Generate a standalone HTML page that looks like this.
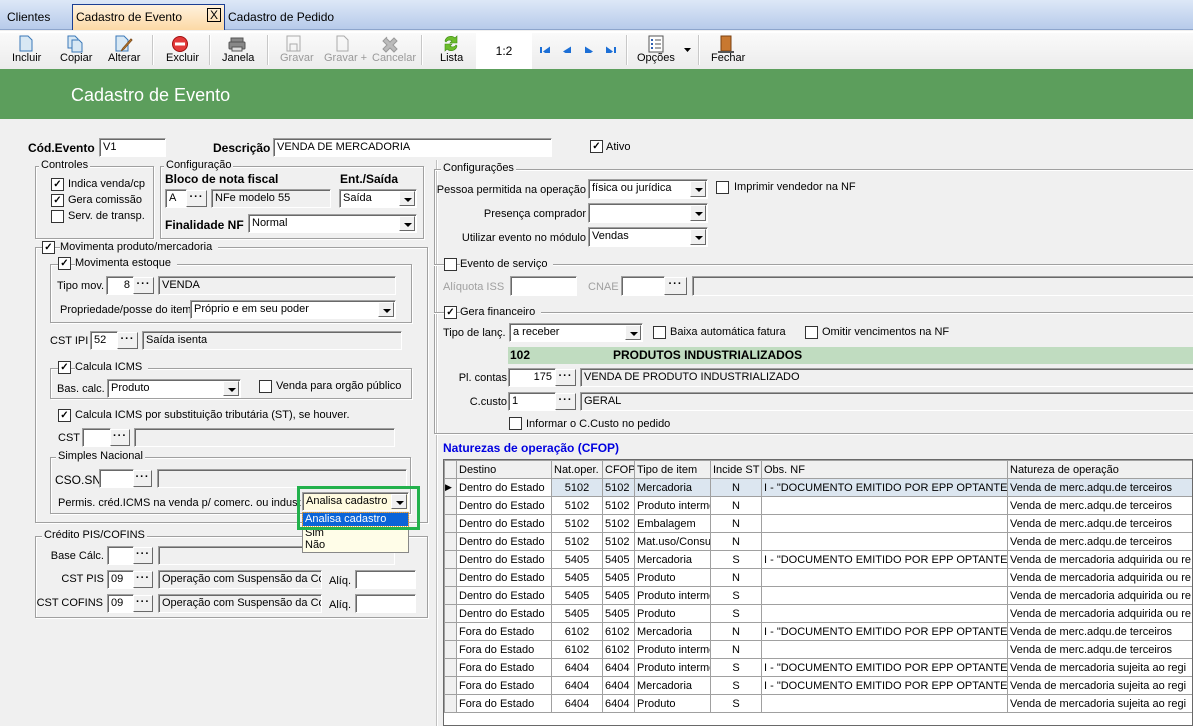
<!DOCTYPE html>
<html><head><meta charset="utf-8">
<style>
*{box-sizing:border-box;margin:0;padding:0}
body{width:1193px;height:726px;overflow:hidden;background:#f0f0f0;font-family:"Liberation Sans",sans-serif;font-size:11px;color:#000;position:relative}
.a{position:absolute;white-space:nowrap}
.r{position:absolute;white-space:nowrap;text-align:right}
.in{position:absolute;background:#fff;border:1px solid;border-color:#a0a0a0 #fff #fff #a0a0a0;box-shadow:inset 1px 1px 0 #696969;padding:1px 3px;line-height:15px;overflow:hidden;white-space:nowrap}
.dis{background:#f0f0f0}
.bt{position:absolute;background:#f0f0f0;border:1px solid;border-color:#fff #696969 #696969 #fff;text-align:center;font-weight:bold;line-height:12px;font-size:11px;letter-spacing:1px}
.cb{position:absolute;width:13px;height:13px;background:#fff;border:1px solid #333;font-size:10px;line-height:11px;text-align:center;font-weight:bold}
.fr{position:absolute;border:1px solid #a0a0a0;box-shadow:1px 1px 0 #fff, inset 1px 1px 0 #fff}
.lg{position:absolute;background:#f0f0f0;padding:0 2px;top:-8px;left:6px;white-space:nowrap}
.ar{position:absolute;right:1px;top:1px;bottom:1px;width:16px;background:#f0f0f0;border:1px solid;border-color:#fff #696969 #696969 #fff}
.ar:after{content:"";position:absolute;left:4px;top:6px;border:4px solid transparent;border-top:4px solid #000;border-bottom:0}
.b{font-weight:bold}
.tb{position:absolute;top:52px;font-size:11px;text-align:center}
.sep{position:absolute;top:35px;width:1px;height:30px;background:#c8c8c8;box-shadow:1px 0 0 #fff}
table{border-collapse:collapse;font-size:11px;table-layout:fixed}
td{border:1px solid #a0a0a0;height:18px;padding:0 2px;white-space:nowrap;overflow:hidden;background:#fff}
.c{text-align:center}
.z{z-index:5}
</style></head><body>
<div class="a" style="left:0;top:0;width:1193px;height:30px;background:linear-gradient(#dde8f7,#b7cbea);border-bottom:1px solid #8da5cc"></div>
<div class="a" style="left:7px;top:10px;font-size:12px">Clientes</div>
<div class="a" style="left:72px;top:4px;width:153px;height:26px;background:linear-gradient(#fff2dd,#fcd9a5);border:1px solid #1c3f94;border-bottom:0"></div>
<div class="a" style="left:76px;top:10px;font-size:12px">Cadastro de Evento</div>
<div class="a" style="left:207px;top:8px;width:14px;height:14px;border:1px solid #000;font-size:12px;line-height:12px;text-align:center">X</div>
<div class="a" style="left:228px;top:10px;font-size:12px">Cadastro de Pedido</div>
<div class="a" style="left:0;top:31px;width:1193px;height:38px;background:linear-gradient(#fafafa,#ececec);border-top:2px solid #fff"></div>
<svg class="a" style="left:0;top:33px" width="760" height="20">
<g fill="#d8e8f4" stroke="#3a78b8"><path d="M20 3h8l4 4v11H20z"/><path d="M68 3h7l3 3v9H68z"/><path d="M72 7h7l3 3v9H72z"/><path d="M116 3h8l4 4v11h-12z"/></g>
<path d="M131 6l-8 9-2 3 3-2 8-9z" fill="#f0a030" stroke="#805020"/>
<circle cx="180" cy="11" r="7.5" fill="#e43a3a" stroke="#a01010"/><rect x="175" y="9.5" width="10" height="3" fill="#fff"/>
<g fill="#888" stroke="#555"><rect x="231" y="5" width="12" height="4"/><rect x="229" y="9" width="16" height="7" rx="1"/><rect x="232" y="14" width="10" height="4" fill="#ddd"/></g>
<g fill="none" stroke="#aaa"><rect x="287" y="3" width="13" height="15"/><rect x="290" y="11" width="7" height="7"/><path d="M337 3h7l4 4v11h-11z"/></g>
<path d="M387 4l-4 4 4 4-4 4 3 3 4-4 4 4 3-3-4-4 4-4-3-3-4 4-4-4z" fill="#bbb" stroke="#999"/>
<path d="M445 8a6 6 0 0 1 10-3l2-2v7h-7l2-2a4 4 0 0 0-6 1zM457 13a6 6 0 0 1-10 3l-2 2v-7h7l-2 2a4 4 0 0 0 6-1z" fill="#6cbd2c" stroke="#3c8a10" stroke-width=".6"/>
<g fill="#1c6fd6"><rect x="540" y="14" width="2" height="9"/><path d="M543 18.5l7-5v10z"/><path d="M563 18.5l8-5v10z"/><path d="M593 18.5l-8-5v10z"/><path d="M613 18.5l-7-5v10z"/><rect x="614" y="14" width="2" height="9"/></g>
<g><rect x="649" y="3" width="14" height="16" fill="#fff" stroke="#555"/><g fill="#3060b0"><rect x="651" y="6" width="2" height="2"/><rect x="651" y="10" width="2" height="2"/><rect x="651" y="14" width="2" height="2"/></g><g stroke="#555"><path d="M655 7h6M655 11h6M655 15h6"/></g></g>
<path d="M684 15h7l-3.5 4z" fill="#000"/>
<rect x="721" y="3" width="10" height="15" fill="#c87830" stroke="#7a4010"/><rect x="718" y="18" width="16" height="2" fill="#555"/>
</svg>
<div class="tb" style="left:12px">Incluir</div>
<div class="tb" style="left:60px">Copiar</div>
<div class="tb" style="left:108px">Alterar</div>
<div class="sep" style="left:152px"></div>
<div class="tb" style="left:166px">Excluir</div>
<div class="sep" style="left:209px"></div>
<div class="tb" style="left:222px">Janela</div>
<div class="sep" style="left:267px"></div>
<div class="tb" style="left:280px;color:#999">Gravar</div>
<div class="tb" style="left:324px;color:#999">Gravar +</div>
<div class="tb" style="left:372px;color:#999">Cancelar</div>
<div class="sep" style="left:421px"></div>
<div class="tb" style="left:440px">Lista</div>
<div class="a" style="left:476px;top:33px;width:56px;height:36px;background:#fff;text-align:center;line-height:36px;font-size:12px">1:2</div>
<div class="sep" style="left:626px"></div>
<div class="tb" style="left:637px">Opções</div>
<div class="sep" style="left:698px"></div>
<div class="tb" style="left:711px">Fechar</div>
<div class="a" style="left:0;top:69px;width:1193px;height:50px;background:#5c9e5c"></div>
<div class="a" style="left:71px;top:85px;color:#fff;font-size:18px">Cadastro de Evento</div>

<div class="a b" style="left:28px;top:141px;font-size:12px">Cód.Evento</div>
<div class="in" style="left:99px;top:138px;width:67px;height:19px">V1</div>
<div class="a b" style="left:213px;top:141px;font-size:12px">Descrição</div>
<div class="in" style="left:273px;top:138px;width:279px;height:19px">VENDA DE MERCADORIA</div>
<div class="cb" style="left:590px;top:140px">✓</div><div class="a" style="left:606px;top:141px">Ativo</div>

<div class="fr" style="left:35px;top:166px;width:119px;height:73px"><div class="lg" style="left:3px">Controles</div></div>
<div class="cb" style="left:51px;top:178px">✓</div><div class="a" style="left:68px;top:178px">Indica venda/cp</div>
<div class="cb" style="left:51px;top:194px">✓</div><div class="a" style="left:68px;top:194px">Gera comissão</div>
<div class="cb" style="left:51px;top:210px"></div><div class="a" style="left:68px;top:210px">Serv. de transp.</div>
<div class="fr" style="left:160px;top:166px;width:264px;height:73px"><div class="lg" style="left:3px">Configuração</div></div>
<div class="a b" style="left:165px;top:172px;font-size:12px">Bloco de nota fiscal</div>
<div class="a b" style="left:340px;top:172px;font-size:12px">Ent./Saída</div>
<div class="in" style="left:165px;top:189px;width:22px;height:19px">A</div><div class="bt" style="left:186px;top:190px;width:21px;height:17px">···</div>
<div class="in dis" style="left:211px;top:189px;width:120px;height:19px">NFe modelo 55</div>
<div class="in" style="left:339px;top:189px;width:78px;height:19px">Saída<div class="ar"></div></div>
<div class="a b" style="left:165px;top:218px;font-size:12px">Finalidade NF</div>
<div class="in" style="left:248px;top:214px;width:169px;height:19px">Normal<div class="ar"></div></div>

<div class="fr" style="left:35px;top:247px;width:393px;height:276px"></div>
<div class="cb" style="left:42px;top:241px">✓</div><div class="a" style="left:60px;top:241px;background:#f0f0f0;padding-right:6px">Movimenta produto/mercadoria</div>
<div class="fr" style="left:50px;top:264px;width:362px;height:59px"></div>
<div class="cb" style="left:58px;top:257px">✓</div><div class="a" style="left:75px;top:257px;background:#f0f0f0;padding-right:6px">Movimenta estoque</div>
<div class="a" style="left:57px;top:280px">Tipo mov.</div>
<div class="in" style="left:106px;top:276px;width:28px;height:19px;text-align:right">8</div><div class="bt" style="left:133px;top:277px;width:21px;height:17px">···</div>
<div class="in dis" style="left:158px;top:276px;width:238px;height:19px">VENDA</div>
<div class="a" style="left:60px;top:304px">Propriedade/posse do item</div>
<div class="in" style="left:190px;top:300px;width:206px;height:19px">Próprio e em seu poder<div class="ar"></div></div>
<div class="a" style="left:50px;top:335px">CST IPI</div>
<div class="in" style="left:90px;top:331px;width:28px;height:19px">52</div><div class="bt" style="left:117px;top:332px;width:21px;height:17px">···</div>
<div class="in dis" style="left:142px;top:331px;width:260px;height:19px">Saída isenta</div>
<div class="fr" style="left:50px;top:368px;width:362px;height:31px"></div>
<div class="cb" style="left:58px;top:361px">✓</div><div class="a" style="left:75px;top:361px;background:#f0f0f0;padding-right:6px">Calcula ICMS</div>
<div class="a" style="left:57px;top:383px">Bas. calc.</div>
<div class="in" style="left:107px;top:379px;width:134px;height:19px">Produto<div class="ar"></div></div>
<div class="cb" style="left:259px;top:380px"></div><div class="a" style="left:276px;top:380px">Venda para orgão público</div>
<div class="cb" style="left:58px;top:409px">✓</div><div class="a" style="left:75px;top:409px">Calcula ICMS por substituição tributária (ST), se houver.</div>
<div class="a" style="left:58px;top:432px">CST</div>
<div class="in" style="left:82px;top:428px;width:29px;height:19px"></div><div class="bt" style="left:110px;top:429px;width:20px;height:17px">···</div>
<div class="in dis" style="left:134px;top:428px;width:261px;height:19px"></div>
<div class="fr" style="left:50px;top:457px;width:361px;height:57px"><div class="lg" style="left:5px">Simples Nacional</div></div>
<div class="a" style="left:55px;top:473px;font-size:12px">CSO.SN</div>
<div class="in" style="left:99px;top:469px;width:35px;height:19px"></div><div class="bt" style="left:133px;top:470px;width:19px;height:17px">···</div>
<div class="in dis" style="left:157px;top:469px;width:250px;height:19px"></div>
<div class="a" style="left:58px;top:497px;width:243px;overflow:hidden">Permis. créd.ICMS na venda p/ comerc. ou industr</div>

<div class="fr" style="left:35px;top:536px;width:393px;height:82px"><div class="lg" style="left:6px">Crédito PIS/COFINS</div></div>
<div class="r" style="right:1089px;top:550px">Base Cálc.</div>
<div class="in" style="left:107px;top:546px;width:27px;height:19px"></div><div class="bt" style="left:133px;top:547px;width:20px;height:17px">···</div>
<div class="in dis" style="left:158px;top:546px;width:237px;height:19px"></div>
<div class="r" style="right:1089px;top:573px">CST PIS</div>
<div class="in" style="left:107px;top:570px;width:27px;height:19px">09</div><div class="bt" style="left:133px;top:571px;width:20px;height:17px">···</div>
<div class="in dis" style="left:158px;top:570px;width:164px;height:19px">Operação com Suspensão da Co</div>
<div class="a" style="left:329px;top:575px">Alíq.</div><div class="in" style="left:355px;top:570px;width:61px;height:19px"></div>
<div class="r" style="right:1090px;top:597px">CST COFINS</div>
<div class="in" style="left:107px;top:594px;width:27px;height:19px">09</div><div class="bt" style="left:133px;top:595px;width:20px;height:17px">···</div>
<div class="in dis" style="left:158px;top:594px;width:164px;height:19px">Operação com Suspensão da Co</div>
<div class="a" style="left:329px;top:599px">Alíq.</div><div class="in" style="left:355px;top:594px;width:61px;height:19px"></div>

<div class="in z" style="left:302px;top:492px;width:107px;height:19px;background:#fffbe0">Analisa cadastro<div class="ar"></div></div>
<div class="a z" style="left:302px;top:512px;width:107px;height:41px;background:#fffde8;border:1px solid #888"></div>
<div class="a z" style="left:303px;top:513px;width:105px;height:13px;background:#0a64d8;color:#fff;line-height:13px;padding-left:2px;outline:1px dotted #f0a030">Analisa cadastro</div>
<div class="a z" style="left:305px;top:527px;line-height:12px">Sim</div>
<div class="a z" style="left:305px;top:539px;line-height:12px">Não</div>
<div class="a z" style="left:297px;top:486px;width:123px;height:44px;border:3px solid #22b14c"></div>

<div class="a" style="left:436px;top:160px;width:1px;height:566px;background:#c0c0c0;box-shadow:1px 0 0 #fff"></div>

<div class="fr" style="left:434px;top:169px;width:770px;height:265px"><div class="lg" style="left:6px">Configurações</div></div>
<div class="r" style="right:607px;top:184px">Pessoa permitida na operação</div>
<div class="in" style="left:588px;top:179px;width:120px;height:20px">física ou jurídica<div class="ar"></div></div>
<div class="cb" style="left:716px;top:181px"></div><div class="a" style="left:734px;top:181px">Imprimir vendedor na NF</div>
<div class="r" style="right:607px;top:208px">Presença comprador</div>
<div class="in" style="left:588px;top:203px;width:120px;height:20px"><div class="ar"></div></div>
<div class="r" style="right:607px;top:232px">Utilizar evento no módulo</div>
<div class="in" style="left:588px;top:227px;width:120px;height:20px">Vendas<div class="ar"></div></div>
<div class="a" style="left:434px;top:264px;width:760px;height:1px;background:#a0a0a0;box-shadow:0 1px 0 #fff"></div>
<div class="cb" style="left:444px;top:258px"></div><div class="a" style="left:460px;top:258px;background:#f0f0f0;padding-right:6px">Evento de serviço</div>
<div class="a" style="left:443px;top:281px;color:#a0a0a0">Alíquota ISS</div>
<div class="in" style="left:510px;top:276px;width:67px;height:20px"></div>
<div class="a" style="left:588px;top:281px;color:#a0a0a0">CNAE</div>
<div class="in" style="left:621px;top:276px;width:44px;height:20px"></div><div class="bt" style="left:664px;top:277px;width:23px;height:18px">···</div>
<div class="in dis" style="left:692px;top:276px;width:502px;height:20px"></div>
<div class="a" style="left:434px;top:312px;width:760px;height:1px;background:#a0a0a0;box-shadow:0 1px 0 #fff"></div>
<div class="cb" style="left:444px;top:306px">✓</div><div class="a" style="left:460px;top:306px;background:#f0f0f0;padding-right:6px">Gera financeiro</div>
<div class="a" style="left:443px;top:327px">Tipo de lanç.</div>
<div class="in" style="left:509px;top:323px;width:134px;height:19px">a receber<div class="ar"></div></div>
<div class="cb" style="left:653px;top:326px"></div><div class="a" style="left:670px;top:326px">Baixa automática fatura</div>
<div class="cb" style="left:805px;top:326px"></div><div class="a" style="left:822px;top:326px">Omitir vencimentos na NF</div>
<div class="a b" style="left:508px;top:347px;width:685px;height:17px;background:#c0dcc0;padding-left:2px;line-height:16px;font-size:12px">102<span style="position:absolute;left:105px">PRODUTOS INDUSTRIALIZADOS</span></div>
<div class="r" style="right:686px;top:372px">Pl. contas</div>
<div class="in" style="left:508px;top:368px;width:48px;height:19px;text-align:right">175</div><div class="bt" style="left:555px;top:369px;width:21px;height:17px">···</div>
<div class="in dis" style="left:580px;top:368px;width:614px;height:19px">VENDA DE PRODUTO INDUSTRIALIZADO</div>
<div class="r" style="right:686px;top:396px">C.custo</div>
<div class="in" style="left:508px;top:392px;width:48px;height:19px">1</div><div class="bt" style="left:555px;top:393px;width:21px;height:17px">···</div>
<div class="in dis" style="left:580px;top:392px;width:614px;height:19px">GERAL</div>
<div class="cb" style="left:509px;top:417px"></div><div class="a" style="left:526px;top:418px">Informar o C.Custo no pedido</div>

<div class="a b" style="left:443px;top:441px;color:#0000e0;font-size:12px">Naturezas de operação (CFOP)</div>
<div class="a" style="left:443px;top:459px;width:750px;height:267px;background:#fff;border:1px solid #696969;overflow:hidden">
<table style="width:760px">
<colgroup><col style="width:12px"><col style="width:95px"><col style="width:51px"><col style="width:32px"><col style="width:76px"><col style="width:51px"><col style="width:246px"><col style="width:197px"></colgroup>
<tr><td style="background:#f0f0f0"></td><td style="background:#f0f0f0">Destino</td><td style="background:#f0f0f0">Nat.oper.</td><td style="background:#f0f0f0">CFOP</td><td style="background:#f0f0f0">Tipo de item</td><td style="background:#f0f0f0">Incide ST</td><td style="background:#f0f0f0">Obs. NF</td><td style="background:#f0f0f0">Natureza de operação</td></tr>
<tr><td style="background:#f0f0f0;font-size:9px;padding:0">▶</td><td>Dentro do Estado</td><td class="c" style="background:#dce6f0">5102</td><td style="background:#dce6f0">5102</td><td style="background:#dce6f0">Mercadoria</td><td class="c" style="background:#dce6f0">N</td><td style="background:#dce6f0">I - "DOCUMENTO EMITIDO POR EPP OPTANTE</td><td style="background:#dce6f0">Venda de merc.adqu.de terceiros</td></tr>
<tr><td style="background:#f0f0f0"></td><td>Dentro do Estado</td><td class="c">5102</td><td>5102</td><td>Produto interme</td><td class="c">N</td><td></td><td>Venda de merc.adqu.de terceiros</td></tr>
<tr><td style="background:#f0f0f0"></td><td>Dentro do Estado</td><td class="c">5102</td><td>5102</td><td>Embalagem</td><td class="c">N</td><td></td><td>Venda de merc.adqu.de terceiros</td></tr>
<tr><td style="background:#f0f0f0"></td><td>Dentro do Estado</td><td class="c">5102</td><td>5102</td><td>Mat.uso/Consu</td><td class="c">N</td><td></td><td>Venda de merc.adqu.de terceiros</td></tr>
<tr><td style="background:#f0f0f0"></td><td>Dentro do Estado</td><td class="c">5405</td><td>5405</td><td>Mercadoria</td><td class="c">S</td><td>I - "DOCUMENTO EMITIDO POR EPP OPTANTE</td><td>Venda de mercadoria adquirida ou re</td></tr>
<tr><td style="background:#f0f0f0"></td><td>Dentro do Estado</td><td class="c">5405</td><td>5405</td><td>Produto</td><td class="c">N</td><td></td><td>Venda de mercadoria adquirida ou re</td></tr>
<tr><td style="background:#f0f0f0"></td><td>Dentro do Estado</td><td class="c">5405</td><td>5405</td><td>Produto interme</td><td class="c">S</td><td></td><td>Venda de mercadoria adquirida ou re</td></tr>
<tr><td style="background:#f0f0f0"></td><td>Dentro do Estado</td><td class="c">5405</td><td>5405</td><td>Produto</td><td class="c">S</td><td></td><td>Venda de mercadoria adquirida ou re</td></tr>
<tr><td style="background:#f0f0f0"></td><td>Fora do Estado</td><td class="c">6102</td><td>6102</td><td>Mercadoria</td><td class="c">N</td><td>I - "DOCUMENTO EMITIDO POR EPP OPTANTE</td><td>Venda de merc.adqu.de terceiros</td></tr>
<tr><td style="background:#f0f0f0"></td><td>Fora do Estado</td><td class="c">6102</td><td>6102</td><td>Produto interme</td><td class="c">N</td><td></td><td>Venda de merc.adqu.de terceiros</td></tr>
<tr><td style="background:#f0f0f0"></td><td>Fora do Estado</td><td class="c">6404</td><td>6404</td><td>Produto interme</td><td class="c">S</td><td>I - "DOCUMENTO EMITIDO POR EPP OPTANTE</td><td>Venda de mercadoria sujeita ao regi</td></tr>
<tr><td style="background:#f0f0f0"></td><td>Fora do Estado</td><td class="c">6404</td><td>6404</td><td>Mercadoria</td><td class="c">S</td><td>I - "DOCUMENTO EMITIDO POR EPP OPTANTE</td><td>Venda de mercadoria sujeita ao regi</td></tr>
<tr><td style="background:#f0f0f0"></td><td>Fora do Estado</td><td class="c">6404</td><td>6404</td><td>Produto</td><td class="c">S</td><td></td><td>Venda de mercadoria sujeita ao regi</td></tr>
</table></div>
</body></html>
